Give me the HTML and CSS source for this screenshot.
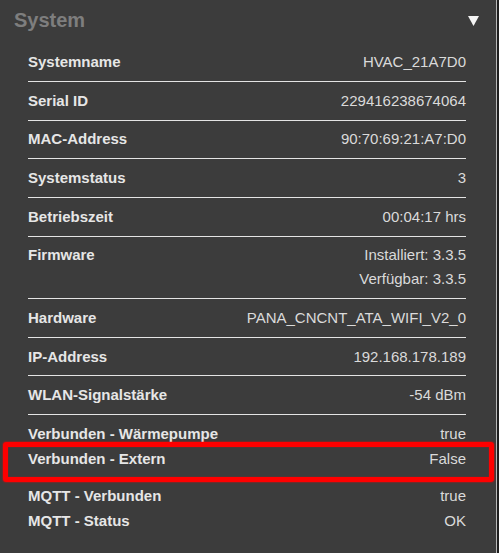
FILE: index.html
```html
<!DOCTYPE html>
<html lang="de">
<head>
<meta charset="utf-8">
<link rel="stylesheet" href="styles.css">
</head>
<body>
<div class="panel">
  <div class="header">
    <span class="title">System</span>
    <svg class="caret" width="11" height="10" viewBox="0 0 11 10"><polygon points="0,0 11,0 5.5,10" fill="#f4f4f4"/></svg>
  </div>
  <div class="rows">
    <div class="row"><span class="label">Systemname</span><span class="value">HVAC_21A7D0</span></div>
    <div class="row"><span class="label">Serial ID</span><span class="value">229416238674064</span></div>
    <div class="row"><span class="label">MAC-Address</span><span class="value">90:70:69:21:A7:D0</span></div>
    <div class="row"><span class="label">Systemstatus</span><span class="value">3</span></div>
    <div class="row"><span class="label">Betriebszeit</span><span class="value">00:04:17 hrs</span></div>
    <div class="row"><span class="label">Firmware</span><span class="value"><span class="line">Installiert: 3.3.5</span><span class="line">Verfügbar: 3.3.5</span></span></div>
    <div class="row"><span class="label">Hardware</span><span class="value">PANA_CNCNT_ATA_WIFI_V2_0</span></div>
    <div class="row"><span class="label">IP-Address</span><span class="value">192.168.178.189</span></div>
    <div class="row"><span class="label">WLAN-Signalstärke</span><span class="value">-54 dBm</span></div>
    <div class="group">
      <div class="sub"><span class="label">Verbunden - Wärmepumpe</span><span class="value">true</span></div>
      <div class="sub"><span class="label">Verbunden - Extern</span><span class="value">False</span></div>
    </div>
    <div class="group">
      <div class="sub"><span class="label">MQTT - Verbunden</span><span class="value">true</span></div>
      <div class="sub"><span class="label">MQTT - Status</span><span class="value">OK</span></div>
    </div>
  </div>
  <div class="highlight"></div>
</div>
</body>
</html>
```
FILE: styles.css
```css
html {
  background: #1e1e1e;
}
body {
  margin: 0;
  font-family: "Liberation Sans", Arial, sans-serif;
  height: 553px;
  overflow: hidden;
}
.panel {
  position: relative;
  width: 496px;
  height: 553px;
  background: #3c3c3c;
  border-right: 1px solid #b8b8b8;
}
.header {
  display: flex;
  align-items: flex-start;
  height: 43.2px;
  box-sizing: border-box;
  padding: 9px 17px 0 14px;
}
.title {
  font-size: 20px;
  line-height: 23px;
  font-weight: bold;
  color: #7e7e7e;
}
.caret {
  margin-left: auto;
  margin-top: 7px;
  display: block;
}
.rows {
  display: flex;
  flex-direction: column;
  padding: 0 30px 0 28px;
}
.row {
  display: flex;
  justify-content: space-between;
  align-items: flex-start;
  padding: 6.95px 0;
  line-height: 23.8px;
  border-bottom: 1px solid #e4e4e4;
  font-size: 15px;
}
.group {
  display: flex;
  flex-direction: column;
  padding: 6px 0 6px;
  font-size: 15px;
}
.sub {
  display: flex;
  justify-content: space-between;
  line-height: 25px;
}
.label {
  font-weight: bold;
  color: #e6e6e6;
}
.value {
  color: #dadada;
  text-align: right;
  display: flex;
  flex-direction: column;
}
.line {
  display: block;
}
.highlight {
  position: absolute;
  left: 3px;
  top: 442px;
  width: 481px;
  height: 30px;
  border: 5px solid #ff0000;
  border-radius: 3px;
  box-shadow: 0 0 2px #ff0000, inset 0 0 1px #ff0000;
}
```
